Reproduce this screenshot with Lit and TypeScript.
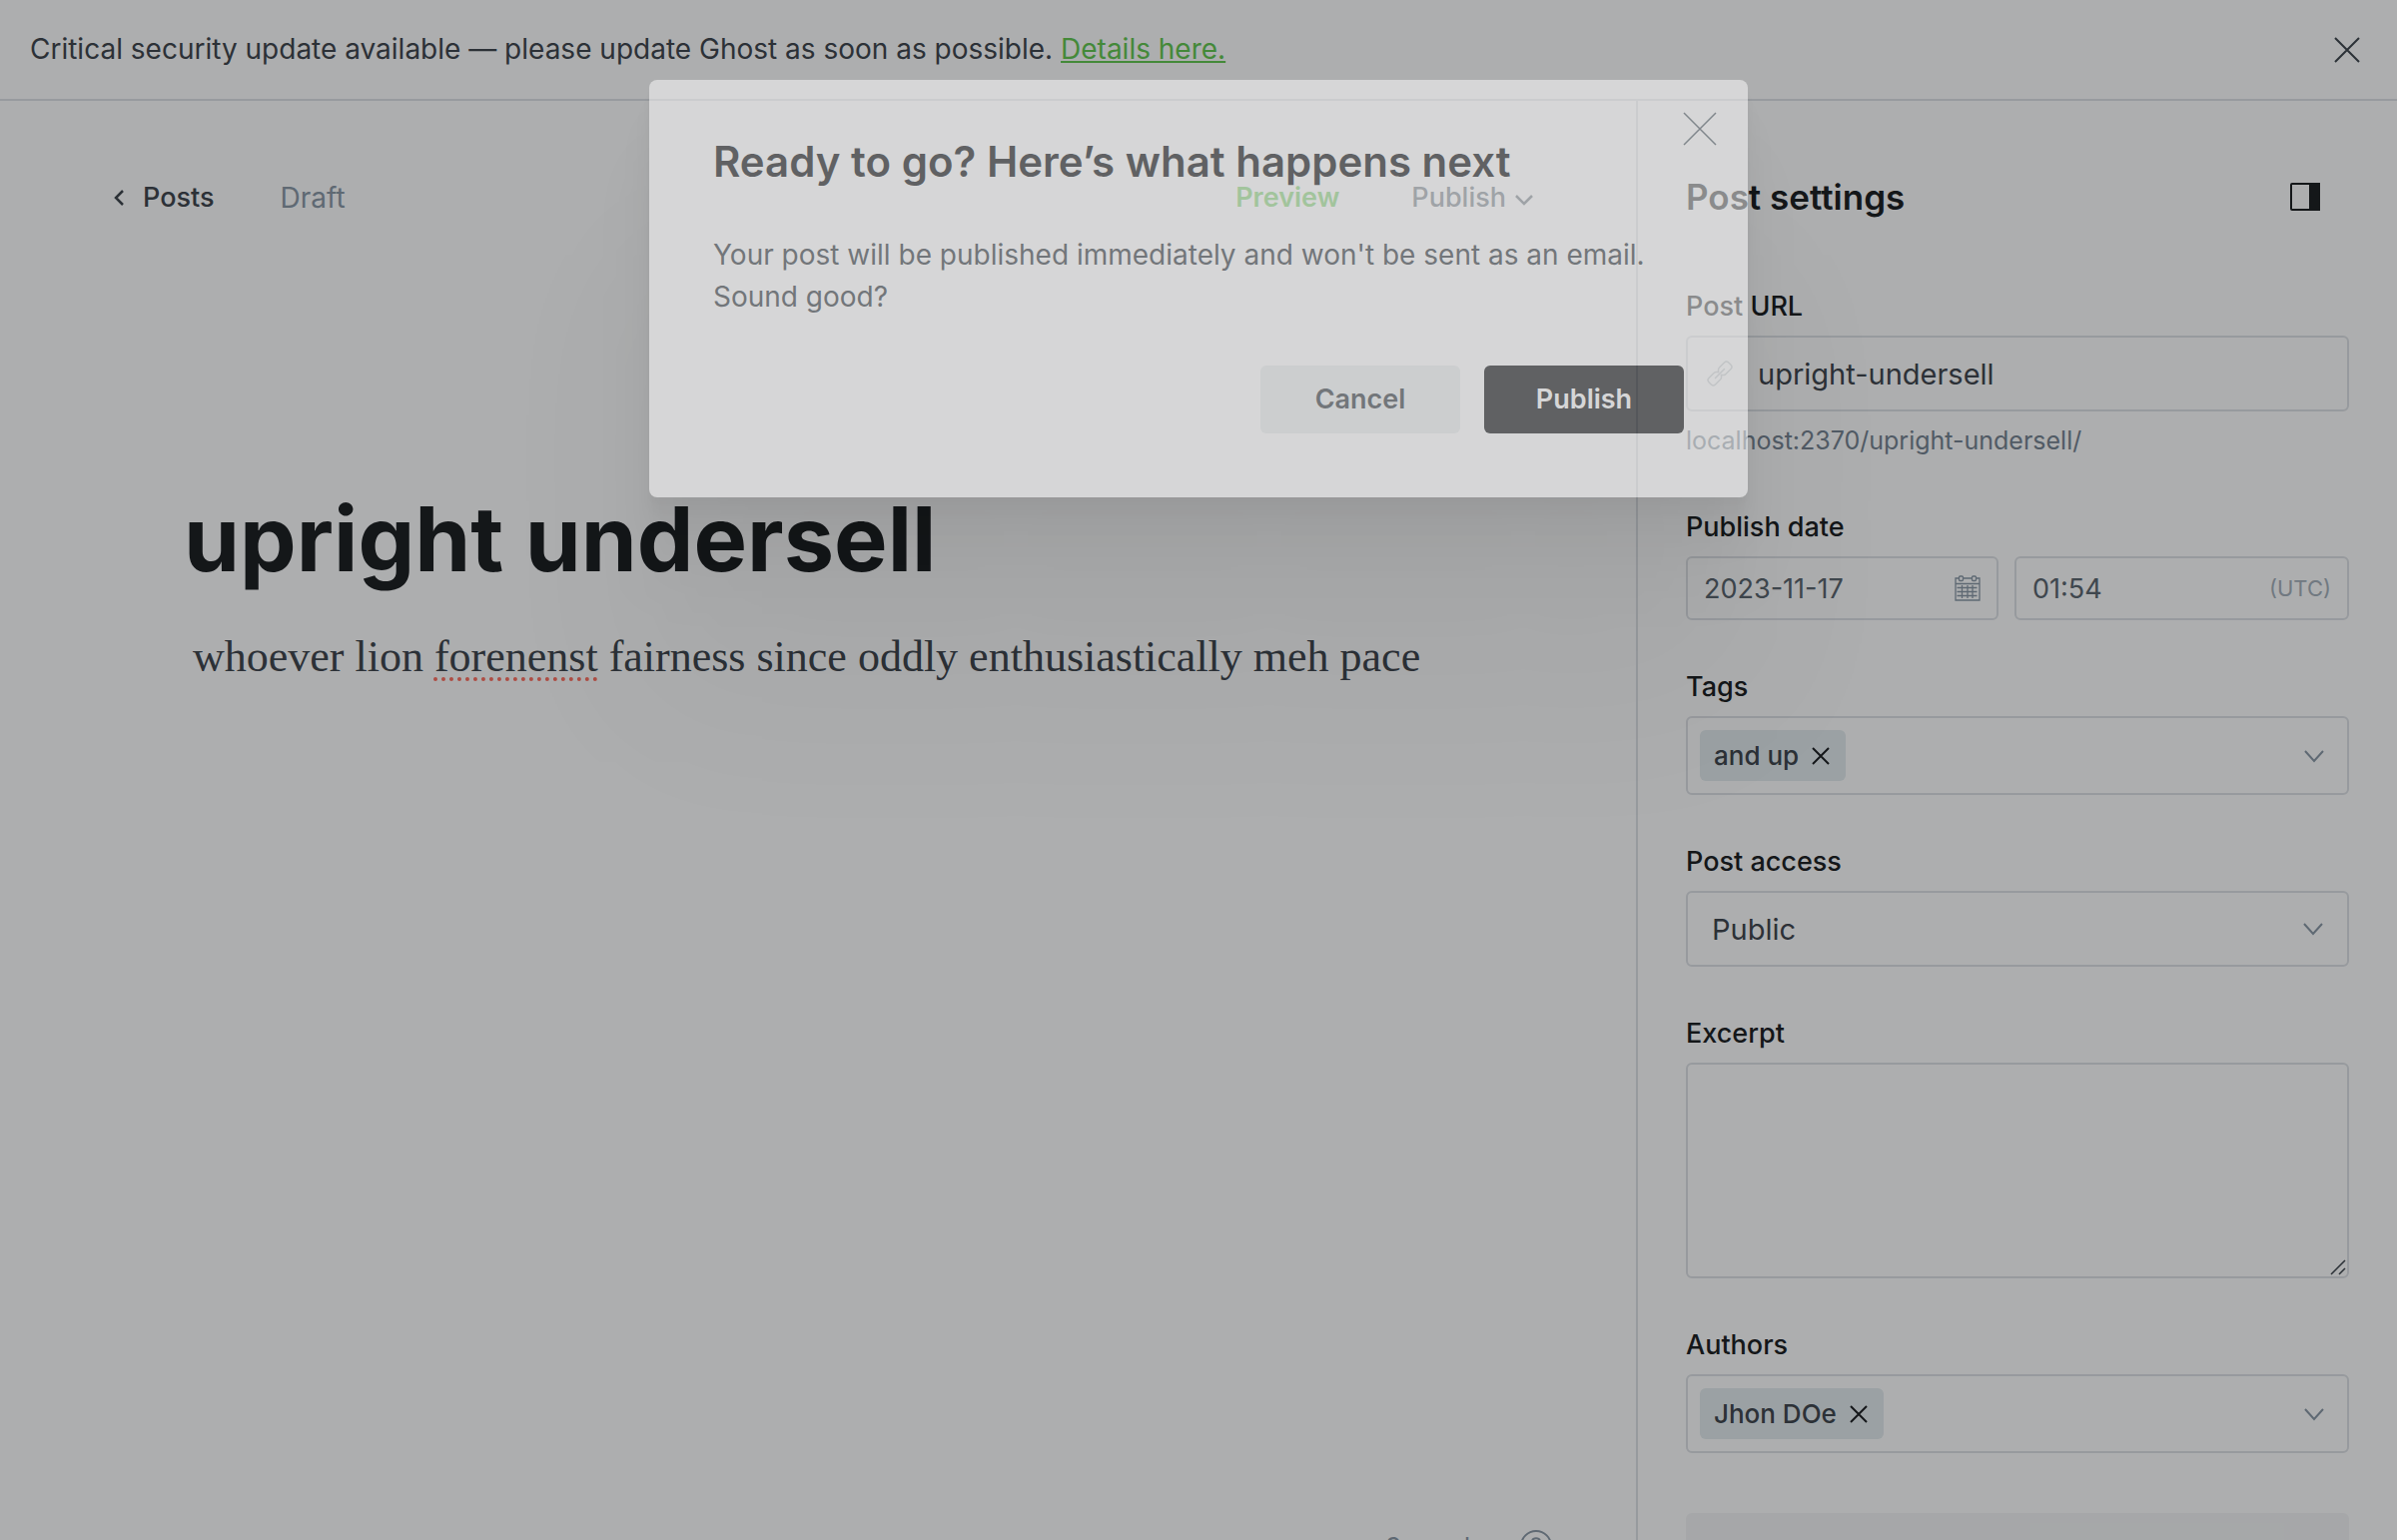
import { LitElement, html, css, svg } from "lit";
import { customElement, property } from "lit/decorators.js";

const palette = css`
  :host {
    --black: #15171a;
    --darkgrey: #394047;
    --slate: #56616a;
    --midgrey: #8796a4;
    --line: #dde1e5;
    --green: #5ec64b;
    font-family: Inter, "Open Sans", sans-serif;
    box-sizing: border-box;
  }
  *,
  *::before,
  *::after {
    box-sizing: border-box;
  }
  button,
  input,
  select,
  textarea {
    font: inherit;
    color: inherit;
    background: none;
    border: 0;
    margin: 0;
    padding: 0;
    outline: 0;
  }
  svg {
    display: block;
    flex: none;
    fill: none;
    stroke: currentColor;
  }
`;

const cross = (size: number, width: number) => html`
  <svg width=${size} height=${size} viewBox="0 0 ${size} ${size}" stroke-width=${width} aria-hidden="true">
    ${svg`<path d="M1 1L${size - 1} ${size - 1}M${size - 1} 1L1 ${size - 1}" />`}
  </svg>
`;

const chevronDown = () => html`
  <svg width="20" height="16" viewBox="0 0 20 16" stroke-width="2" aria-hidden="true">
    <path d="M1 3l9 10 9-10" />
  </svg>
`;

@customElement("update-banner")
export class UpdateBanner extends LitElement {
  static styles = [
    palette,
    css`
      .banner {
        display: flex;
        align-items: center;
        justify-content: space-between;
        padding: 28px 37px 28px 30px;
        border-bottom: 2px solid var(--line);
        font-size: 28px;
        line-height: 43px;
        color: var(--darkgrey);
      }
      .text {
        margin: 0;
      }
      .link {
        color: var(--green);
        text-decoration: underline;
      }
    `,
  ];

  render() {
    return html`
      <aside class="banner">
        <p class="text">
          Critical security update available — please update Ghost as soon as possible.
          <a class="link" href="#update">Details here.</a>
        </p>
        <button class="close" aria-label="Dismiss">${cross(26, 2)}</button>
      </aside>
    `;
  }
}

@customElement("post-editor")
export class PostEditor extends LitElement {
  static styles = [
    palette,
    css`
      :host {
        display: flex;
        flex-direction: column;
        flex: 1;
        min-width: 0;
      }
      .toolbar {
        display: flex;
        align-items: center;
        justify-content: space-between;
        padding: 75px 102px 0 113px;
        font-size: 27px;
        line-height: 44px;
      }
      .group {
        display: flex;
        align-items: center;
      }
      .back {
        display: flex;
        align-items: center;
        gap: 17px;
        color: var(--darkgrey);
        font-weight: 500;
        text-decoration: none;
      }
      .status {
        margin-left: 66px;
        color: var(--midgrey);
        font-size: 28px;
      }
      .preview {
        color: var(--green);
        font-weight: 600;
      }
      .publish {
        display: flex;
        align-items: center;
        gap: 8px;
        margin-left: 72px;
        color: var(--slate);
        font-weight: 500;
      }
      .canvas {
        flex: 1;
        padding: 262px 184px 0;
      }
      .title {
        margin: 0;
        color: var(--black);
        font-size: 90px;
        font-weight: 700;
        line-height: 116px;
      }
      .body {
        margin: 28px 0 0;
        padding-left: 9px;
        color: var(--darkgrey);
        font-family: Georgia, "Liberation Serif", serif;
        font-size: 44px;
        line-height: 64px;
      }
      .misspelt {
        text-decoration: underline dotted #ff6a5a 4px;
        text-underline-offset: 6px;
        text-decoration-skip-ink: none;
      }
      .footer {
        display: flex;
        align-items: flex-start;
        justify-content: flex-end;
        gap: 36px;
        height: 10px;
        padding-right: 84px;
        color: var(--midgrey);
        font-size: 26px;
        line-height: 34px;
      }
      .help {
        display: flex;
        color: inherit;
      }
    `,
  ];

  render() {
    return html`
      <header class="toolbar">
        <div class="group">
          <a class="back" href="#posts">
            <svg width="13" height="18" viewBox="0 0 13 18" stroke-width="2.5" aria-hidden="true">
              <path d="M10 2L3 9l7 7" />
            </svg>
            Posts
          </a>
          <span class="status">Draft</span>
        </div>
        <div class="group">
          <button class="preview">Preview</button>
          <button class="publish">
            Publish
            <svg width="20" height="20" viewBox="0 0 20 20" stroke-width="2.5" aria-hidden="true">
              <path d="M2 8l8 8 8-8" />
            </svg>
          </button>
        </div>
      </header>
      <main class="canvas">
        <h1 class="title">upright undersell</h1>
        <p class="body">
          whoever lion <span class="misspelt">forenenst</span> fairness since oddly enthusiastically meh pace
        </p>
      </main>
      <footer class="footer">
        <span class="count">9 words</span>
        <a class="help" href="#help" aria-label="Help">
          <svg width="32" height="32" viewBox="0 0 32 32" stroke-width="2">
            <circle cx="16" cy="16" r="15" />
            <path d="M12 12c0-5 8-5 8 0 0 3-4 3-4 7M16 22v2" />
          </svg>
        </a>
      </footer>
    `;
  }
}

@customElement("token-field")
export class TokenField extends LitElement {
  @property() label = "";
  @property() token = "";

  static styles = [
    palette,
    css`
      .label {
        display: block;
        margin-bottom: 12px;
        color: var(--black);
        font-size: 27px;
        font-weight: 500;
        line-height: 34px;
      }
      .box {
        display: flex;
        align-items: center;
        height: 79px;
        padding: 0 23px 0 12px;
        border: 2px solid var(--line);
        border-radius: 6px;
        color: var(--midgrey);
      }
      .token {
        display: flex;
        align-items: center;
        gap: 13px;
        padding: 8px 16px 8px 14px;
        border-radius: 6px;
        background: #e3ebee;
        color: var(--darkgrey);
        font-size: 26px;
        font-weight: 500;
        line-height: 35px;
      }
      .remove {
        color: var(--black);
      }
      .entry {
        flex: 1;
        min-width: 0;
      }
    `,
  ];

  render() {
    return html`
      <label class="label" for="entry">${this.label}</label>
      <div class="box">
        <span class="token">
          ${this.token}
          <button class="remove" aria-label="Remove ${this.token}">${cross(18, 2)}</button>
        </span>
        <input class="entry" id="entry" />
        ${chevronDown()}
      </div>
    `;
  }
}

@customElement("post-settings")
export class PostSettings extends LitElement {
  static styles = [
    palette,
    css`
      :host {
        flex: 0 0 762px;
        min-width: 0;
        border-left: 2px solid var(--line);
        padding: 72px 48px 0;
      }
      .head {
        display: flex;
        align-items: center;
        justify-content: space-between;
        padding-right: 28px;
        color: var(--black);
      }
      .heading {
        margin: 0;
        font-size: 35px;
        font-weight: 600;
        line-height: 48px;
      }
      .fields {
        display: grid;
        grid-template-columns: minmax(0, 1fr);
        gap: 50px;
        margin-top: 69px;
      }
      .label {
        display: block;
        margin-bottom: 12px;
        color: var(--black);
        font-size: 27px;
        font-weight: 500;
        line-height: 34px;
      }
      .box {
        display: flex;
        align-items: center;
        border: 2px solid var(--line);
        border-radius: 6px;
      }
      .tall {
        height: 76px;
        color: var(--darkgrey);
        font-size: 29px;
      }
      .url {
        gap: 25px;
        padding: 0 19px;
      }
      .link-icon {
        color: #c2c8cd;
      }
      .grow {
        flex: 1;
        width: 0;
        min-width: 0;
      }
      .hint {
        margin: 10px 0 0;
        color: #72808e;
        font-size: 25px;
        line-height: 39px;
      }
      .dates {
        display: grid;
        grid-template-columns: minmax(0, 313fr) minmax(0, 335fr);
        gap: 16px;
      }
      .short {
        height: 64px;
        padding: 0 16px;
        color: var(--slate);
        font-size: 27px;
      }
      .pale {
        color: var(--midgrey);
      }
      .zone {
        color: #a3aeb8;
        font-size: 22px;
      }
      .access {
        padding: 0 24px;
      }
      .select {
        appearance: none;
      }
      .note {
        position: relative;
        display: block;
      }
      .excerpt {
        display: block;
        width: 100%;
        height: 216px;
        padding: 12px 16px;
        border: 2px solid var(--line);
        border-radius: 6px;
        resize: none;
      }
      .grip {
        position: absolute;
        right: 3px;
        bottom: 3px;
        color: var(--darkgrey);
      }
      .card {
        display: block;
        width: 100%;
        margin-top: 10px;
        padding: 20px 30px;
        border-radius: 6px;
        background: #f4f5f6;
        color: var(--darkgrey);
        font-size: 28px;
        font-weight: 500;
        line-height: 36px;
        text-align: left;
      }
    `,
  ];

  render() {
    return html`
      <header class="head">
        <h2 class="heading">Post settings</h2>
        <button class="toggle" aria-label="Toggle settings">
          <svg width="32" height="30" viewBox="0 0 32 30" stroke-width="2" aria-hidden="true">
            <rect x="2" y="2" width="28" height="26" rx="1" />
            <path d="M21 2h9v26h-9z" fill="currentColor" />
          </svg>
        </button>
      </header>
      <div class="fields">
        <div class="field">
          <label class="label" for="url">Post URL</label>
          <div class="box tall url">
            <svg class="link-icon" width="26" height="26" viewBox="0 0 26 26" stroke-width="1.5" stroke-linecap="round" aria-hidden="true">
              <path d="M11.500 11.500v-2.500a3 3 0 0 1 1-2L17.500 2a3 3 0 0 1 4.200 0l2.300 2.300a3 3 0 0 1 0 4.200l-5 5a3 3 0 0 1-2 1h-2.500" />
              <path d="M11.500 11.500h-2.500a3 3 0 0 0-2 1L2 17.500a3 3 0 0 0 0 4.200L4.300 24a3 3 0 0 0 4.200 0l5-5a3 3 0 0 0 1-2v-2.500" />
              <path d="M8.500 17.500l9-9" />
            </svg>
            <input class="grow" id="url" value="upright-undersell" />
          </div>
          <p class="hint">localhost:2370/upright-undersell/</p>
        </div>
        <div class="field">
          <label class="label" for="date">Publish date</label>
          <div class="dates">
            <div class="box short">
              <input class="grow" id="date" value="2023-11-17" />
              <svg class="pale" width="26" height="26" viewBox="0 0 26 26" stroke-width="1.3" aria-hidden="true">
                <path d="M4.500 3H1v22h24V3h-3.500M8.500 3h9M1 8.500h24M7.500 10v13M13 10v13M18 10v13M2.500 12.500h20M2.500 16.500h20M2.500 20.500h20" />
                <rect x="4.500" y="1" width="4" height="4.500" rx="1" />
                <rect x="17.500" y="1" width="4" height="4.500" rx="1" />
              </svg>
            </div>
            <div class="box short">
              <input class="grow" aria-label="Publish time" value="01:54" />
              <span class="zone">(UTC)</span>
            </div>
          </div>
        </div>
        <token-field label="Tags" token="and up"></token-field>
        <div class="field">
          <label class="label" for="access">Post access</label>
          <div class="box tall access">
            <select class="grow select" id="access">
              <option>Public</option>
            </select>
            <span class="pale">${chevronDown()}</span>
          </div>
        </div>
        <div class="field">
          <label class="label" for="excerpt">Excerpt</label>
          <span class="note">
            <textarea class="excerpt" id="excerpt"></textarea>
            <svg class="grip" width="16" height="16" viewBox="0 0 16 16" stroke-width="1.5" aria-hidden="true">
              <path d="M1 15L15 1M9 15l6-6" />
            </svg>
          </span>
        </div>
        <token-field label="Authors" token="Jhon DOe"></token-field>
        <button class="card">Meta data</button>
      </div>
    `;
  }
}

@customElement("publish-dialog")
export class PublishDialog extends LitElement {
  static styles = [
    palette,
    css`
      :host {
        position: absolute;
        inset: 0;
        display: flex;
        align-items: flex-start;
        justify-content: center;
        padding-top: 80px;
        background: rgba(21, 23, 26, 0.35);
      }
      .dialog {
        position: relative;
        width: 1100px;
        padding: 58px 64px 64px;
        border-radius: 8px;
        background: #fff;
        box-shadow:
          0 6px 4px rgba(0, 0, 0, 0.02),
          0 14px 10px rgba(0, 0, 0, 0.028),
          0 26px 20px rgba(0, 0, 0, 0.035),
          0 44px 36px rgba(0, 0, 0, 0.042),
          0 84px 66px rgba(0, 0, 0, 0.05),
          0 200px 160px rgba(0, 0, 0, 0.07);
        opacity: 0.5;
      }
      .close {
        position: absolute;
        top: 32px;
        right: 31px;
        color: var(--slate);
      }
      .title {
        margin: 0;
        color: var(--black);
        font-size: 42px;
        font-weight: 600;
        line-height: 48px;
      }
      .text {
        margin: 48px 0 0;
        color: var(--darkgrey);
        font-size: 28px;
        line-height: 42px;
      }
      .actions {
        display: flex;
        justify-content: flex-end;
        gap: 24px;
        margin-top: 48px;
      }
      .action {
        width: 200px;
        border-radius: 6px;
        background: #ebeef0;
        color: var(--darkgrey);
        font-size: 27px;
        font-weight: 600;
        line-height: 68px;
      }
      .primary {
        background: var(--black);
        color: #fff;
      }
    `,
  ];

  render() {
    return html`
      <section class="dialog" role="dialog" aria-labelledby="dialog-title">
        <button class="close" aria-label="Close">${cross(34, 1.5)}</button>
        <h2 class="title" id="dialog-title">Ready to go? Here’s what happens next</h2>
        <p class="text">
          Your post will be published immediately and won't be sent as an email.<br />Sound good?
        </p>
        <div class="actions">
          <button class="action">Cancel</button>
          <button class="action primary">Publish</button>
        </div>
      </section>
    `;
  }
}

@customElement("app-root")
export class AppRoot extends LitElement {
  static styles = [
    palette,
    css`
      :host {
        position: relative;
        display: flex;
        flex-direction: column;
        height: 100vh;
        overflow: hidden;
        background: #fff;
      }
      .workspace {
        display: flex;
        flex: 1;
        min-height: 0;
      }
    `,
  ];

  render() {
    return html`
      <update-banner></update-banner>
      <div class="workspace">
        <post-editor></post-editor>
        <post-settings></post-settings>
      </div>
      <publish-dialog></publish-dialog>
    `;
  }
}
